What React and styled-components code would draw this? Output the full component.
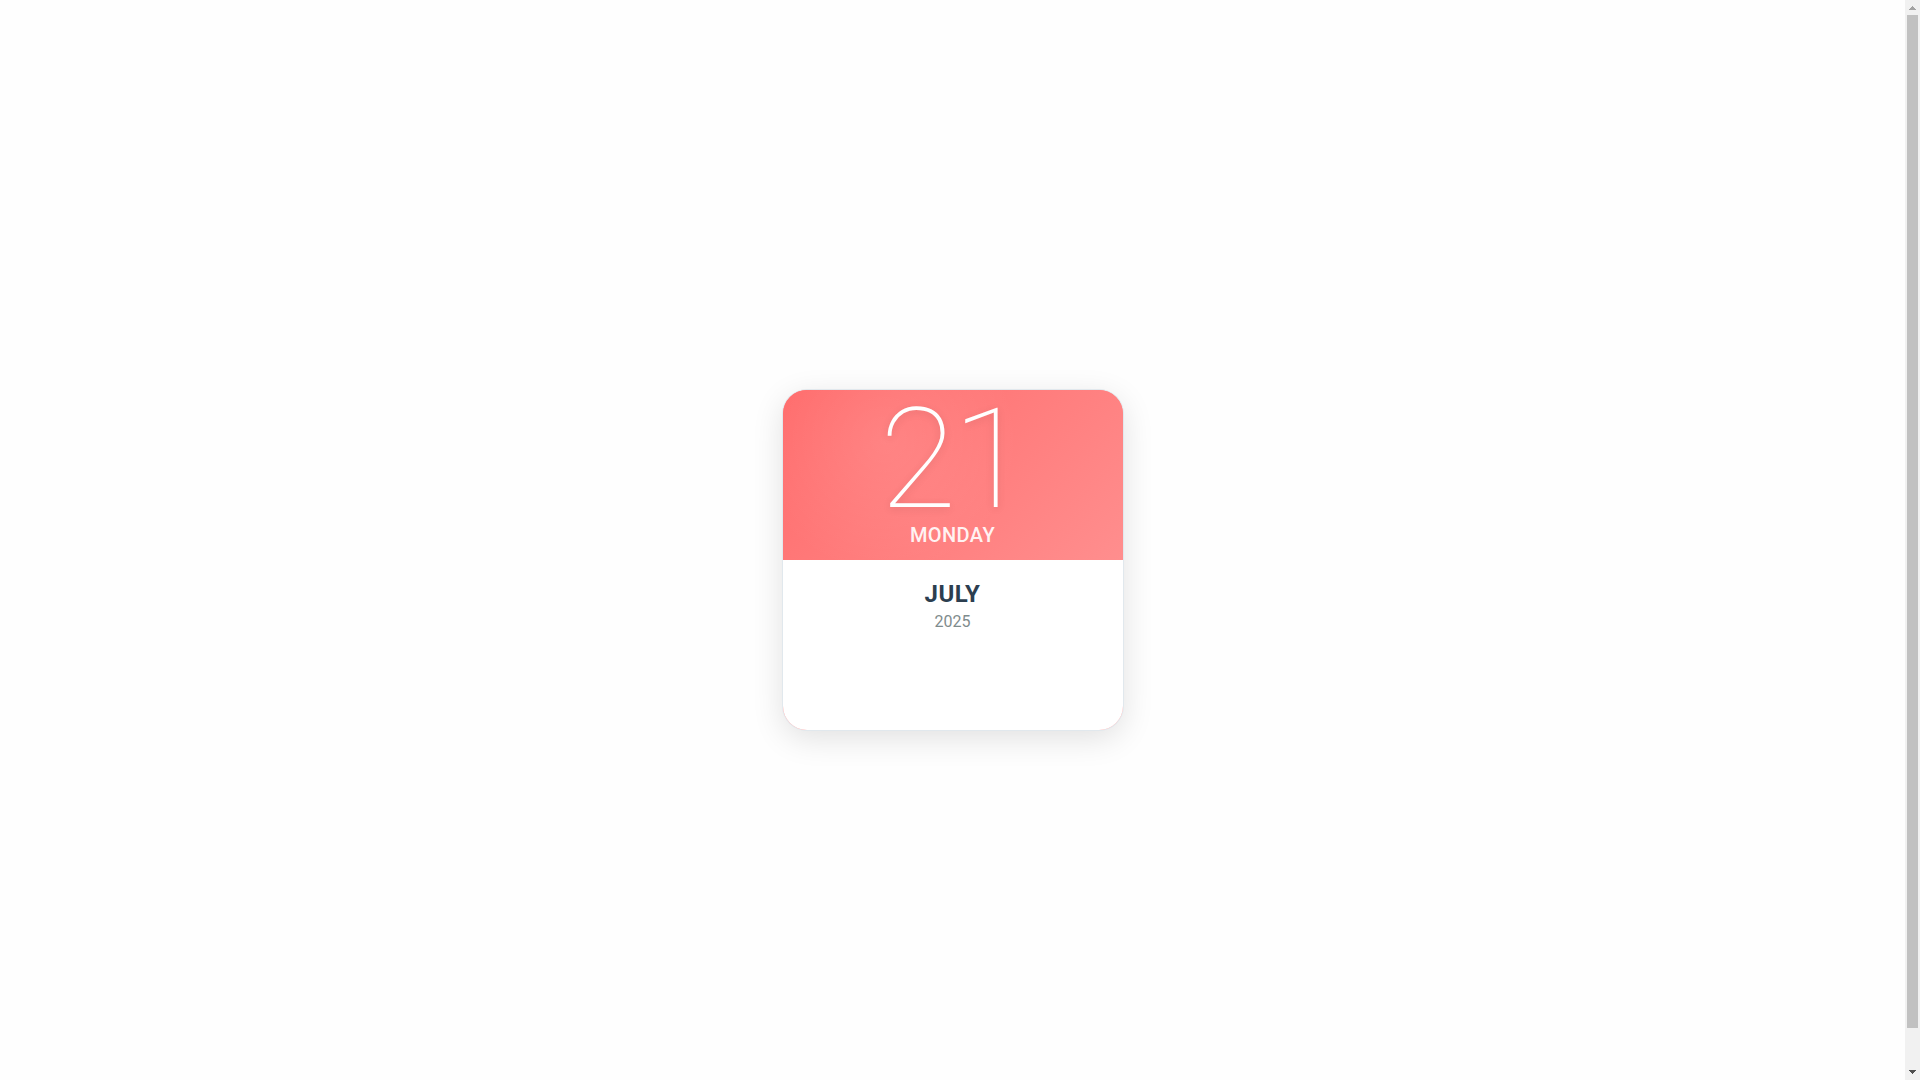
import { useRef, useState } from "react";
import styled, { createGlobalStyle } from "styled-components";

const GlobalStyle = createGlobalStyle`
* {
    box-sizing: border-box;
}

body {
    margin: 0;
    background: #fefefe;
    font-family: Roboto, "Liberation Sans", sans-serif;
}
`;

const Window = styled.div`
display: flex;
height: 100vh;
`;

const ScrollArea = styled.div`
flex: 1;
overflow-y: auto;
scrollbar-width: none;
`;

const Page = styled.main`
box-sizing: content-box;
display: flex;
align-items: center;
justify-content: center;
min-height: 100vh;
padding: 20px;
`;

const ScrollBar = styled.div`
display: flex;
flex-direction: column;
width: 15px;
background: #f1f1f1;
`;

const ScrollButton = styled.button`
display: flex;
align-items: center;
justify-content: center;
height: 15px;
padding: ${({ $up }) => ($up ? "1px 0 0" : "0 0 1px")};
border: none;
background: none;
color: ${({ $dim }) => ($dim ? "#a3a3a3" : "#505050")};
`;

const Track = styled.div`
flex: 1;
padding: 0 2px;
`;

const Thumb = styled.div`
height: calc(100% * 100vh / (100vh + 40px));
background: #c1c1c1;
`;

const Card = styled.article`
display: grid;
grid-template-rows: 1fr 1fr;
width: 340px;
min-height: 340px;
border-radius: 24px;
overflow: hidden;
background: linear-gradient(135deg, #ff6b6b, #ff8e8e);
box-shadow: 0 0 0 1px #e1e8ed, 0 8px 32px rgba(0, 0, 0, 0.12);
`;

const CardTop = styled.header`
display: flex;
flex-direction: column;
align-items: center;
justify-content: center;
padding-bottom: 4px;
background:
    radial-gradient(circle at 30% 30%, rgba(255, 255, 255, 0.1), transparent 50%),
    linear-gradient(135deg, #ff6b6b, #ff8e8e);
color: white;
`;

const Day = styled.div`
font-size: 140px;
font-weight: 100;
line-height: 120px;
letter-spacing: -4px;
text-shadow: 0 2px 8px rgba(0, 0, 0, 0.1);
`;

const Weekday = styled.div`
margin-top: 4px;
font-size: 20px;
font-weight: 500;
line-height: 24px;
letter-spacing: 0.02em;
opacity: 0.9;
`;

const CardBottom = styled.div`
padding: 20px;
background: white;
text-align: center;
`;

const Month = styled.div`
font-size: 24px;
font-weight: 700;
line-height: 28px;
letter-spacing: 0.02em;
color: #2c3e50;
`;

const Year = styled.div`
margin-top: 4px;
font-size: 16px;
line-height: 19px;
color: #7f8c8d;
`;

function App() {
    const area = useRef(null);
    const [atTop, setAtTop] = useState(true);

    function scroll(top) {
        area.current.scrollBy({ top });
    }

    return (<>
        <GlobalStyle />
        <Window>
            <ScrollArea ref={area} onScroll={(e) => setAtTop(e.target.scrollTop === 0)}>
                <Page>
                    <Card>
                        <CardTop>
                            <Day>21</Day>
                            <Weekday>MONDAY</Weekday>
                        </CardTop>
                        <CardBottom>
                            <Month>JULY</Month>
                            <Year>2025</Year>
                        </CardBottom>
                    </Card>
                </Page>
            </ScrollArea>
            <ScrollBar>
                <ScrollButton aria-label="Scroll up" $up $dim={atTop} onClick={() => scroll(-40)}>
                    <svg width="7" height="4" shapeRendering="crispEdges" fill="currentColor">
                        <path d="M3 0h1v1h1v1h1v1h1v1H0V3h1V2h1V1h1z" />
                    </svg>
                </ScrollButton>
                <Track>
                    <Thumb />
                </Track>
                <ScrollButton aria-label="Scroll down" $dim={!atTop} onClick={() => scroll(40)}>
                    <svg width="7" height="4" shapeRendering="crispEdges" fill="currentColor">
                        <path d="M0 0h7v1H6v1H5v1H4v1H3V3H2V2H1V1H0z" />
                    </svg>
                </ScrollButton>
            </ScrollBar>
        </Window>
    </>);
}

export default App;
